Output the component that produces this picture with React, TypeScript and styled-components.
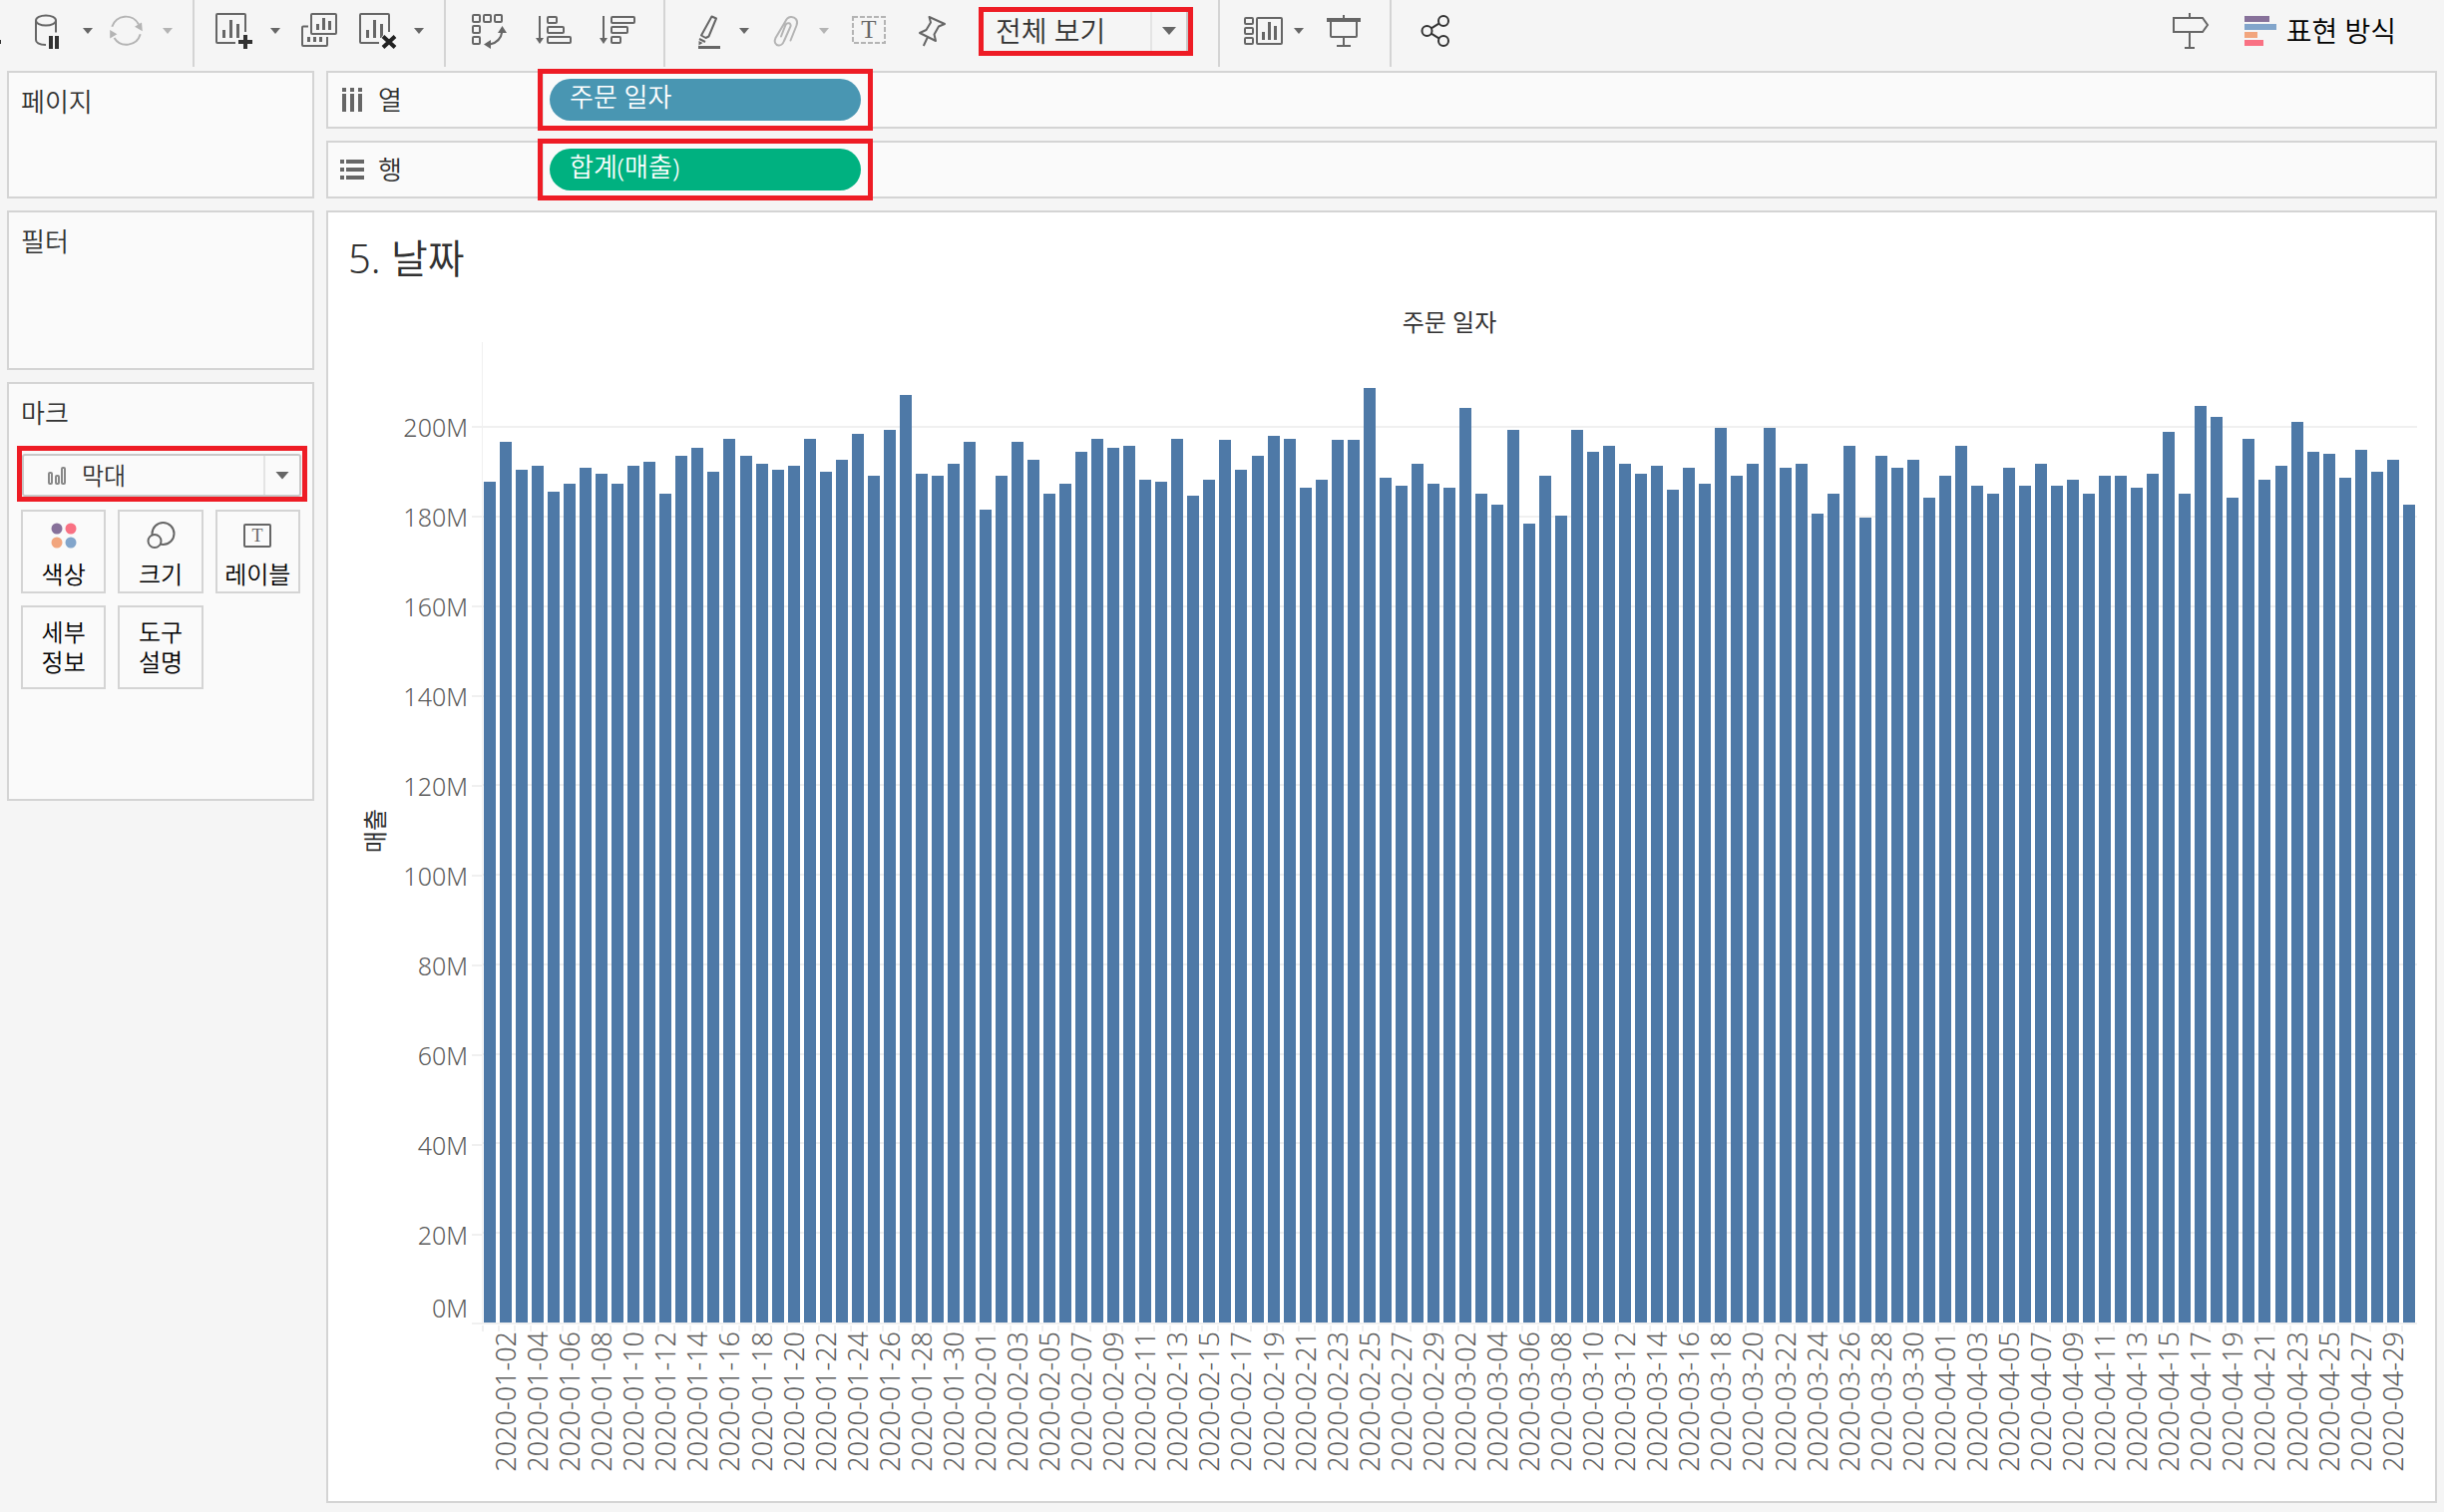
import React from "react";
import styled, { createGlobalStyle, css } from "styled-components";

const color = {
  page: "#f5f5f5",
  panel: "#fafafa",
  line: "#d4d4d4",
  faint: "#f0f0f0",
  icon: "#666666",
  axis: "#5c5c5c",
  dark: "#323232",
  muted: "#b4b4b4",
  bar: "#4e79a7",
  callout: "#ee1c25",
  dimension: "#4996b2",
  measure: "#00b180",
};

const Global = createGlobalStyle`
  * { box-sizing: border-box; }
  body {
    margin: 0;
    background: ${color.page};
    color: ${color.dark};
    font-family: "Noto Sans", "Noto Sans CJK KR", sans-serif;
    font-size: 26px;
    font-weight: 350;
    line-height: 30px;
  }
  button, select { font: inherit; color: inherit; }
  h1, h2 { margin: 0; font-weight: inherit; }
`;

/* ---------- data ---------- */

const sales = [
  187.8, 196.7, 190.4, 191.3, 185.5, 187.3, 190.9, 189.5, 187.3, 191.3,
  192.2, 185.1, 193.5, 195.3, 190.0, 197.5, 193.5, 191.8, 190.4, 191.3,
  197.5, 190.0, 192.7, 198.4, 189.1, 199.3, 207.3, 189.5, 189.1, 191.8,
  196.7, 181.5, 189.1, 196.7, 192.7, 185.1, 187.3, 194.4, 197.5, 195.3,
  195.8, 188.2, 187.8, 197.5, 184.6, 188.2, 197.1, 190.4, 193.5, 198.0,
  197.5, 186.4, 188.2, 197.1, 197.1, 208.7, 188.6, 186.9, 191.8, 187.3,
  186.4, 204.2, 185.1, 182.8, 199.3, 178.4, 189.1, 180.2, 199.3, 194.4,
  195.8, 191.8, 189.5, 191.3, 186.0, 190.9, 187.3, 199.8, 189.1, 191.8,
  199.8, 190.9, 191.8, 180.6, 185.1, 195.8, 179.7, 193.5, 190.9, 192.7,
  184.2, 189.1, 195.8, 186.9, 185.1, 190.9, 186.9, 191.8, 186.9, 188.2,
  185.1, 189.1, 189.1, 186.4, 189.5, 198.9, 185.1, 204.7, 202.4, 184.2,
  197.5, 188.2, 191.3, 201.1, 194.4, 194.0, 188.6, 194.9, 190.0, 192.7,
  182.8,
];

const DAY = 24 * 60 * 60 * 1000;
const days = sales.map((value, i) => ({
  value,
  date: new Date(Date.UTC(2020, 0, 1) + i * DAY).toISOString().slice(0, 10),
}));
const axisMax = 219;
const axisSteps = [200, 180, 160, 140, 120, 100, 80, 60, 40, 20];

/* ---------- toolbar ---------- */

const Page = styled.div`
  display: flex;
  flex-direction: column;
  height: 100vh;
  min-height: 900px;
  overflow: hidden;
`;

const Toolbar = styled.header`
  display: flex;
  height: 67px;
  margin-bottom: 4px;
`;

const Group = styled.div<{ $gap?: number; $start?: number; $end?: number }>`
  display: flex;
  align-items: center;
  height: 62px;
  gap: ${(p) => p.$gap ?? 28}px;
  padding-left: ${(p) => p.$start ?? 0}px;
  padding-right: ${(p) => p.$end ?? 0}px;
`;

const Separator = styled.div`
  width: 2px;
  background: ${color.line};
`;

const RightGroup = styled(Group)`
  margin-left: auto;
`;

const ToolButton = styled.button`
  display: flex;
  align-items: center;
  gap: 10px;
  padding: 0;
  border: 0;
  background: none;
  color: ${color.icon};
  cursor: pointer;
  &:disabled {
    color: ${color.muted};
    cursor: default;
  }
`;

const Split = styled.div<{ $gap?: number }>`
  display: flex;
  align-items: center;
  gap: ${(p) => p.$gap ?? 18}px;
`;

const Caret = styled.span<{ $large?: boolean }>`
  display: block;
  width: ${(p) => (p.$large ? 14 : 10)}px;
  height: ${(p) => (p.$large ? 8 : 6)}px;
  background: currentColor;
  clip-path: polygon(0 0, 100% 0, 50% 100%);
`;

const ShowMeText = styled.span`
  color: #000;
  font-size: 28px;
`;

const Svg = styled.svg`
  display: block;
  overflow: visible;
  fill: none;
  stroke: currentColor;
  stroke-width: 2;
`;

const Solid = styled.g`
  fill: currentColor;
  stroke: none;
`;

function Icon({ w = 36, h = 36, children }: { w?: number; h?: number; children: React.ReactNode }) {
  return (
    <Svg width={w} height={h} viewBox={`0 0 ${w} ${h}`} aria-hidden="true">
      {children}
    </Svg>
  );
}

const ClippedIcon = () => (
  <Icon w={29}>
    <rect x="0" y="27" width="1" height="4" fill={color.dark} stroke="none" />
  </Icon>
);
const DataPauseIcon = () => (
  <Icon>
    <ellipse cx="17" cy="7.5" rx="10" ry="5" />
    <path d="M7 7.5V27c0 3 4 4.8 10 5M27 7.5V19.5" />
    <path d="M20 23h4v13h-4zM26 23h4v13h-4z" fill={color.dark} stroke="none" />
  </Icon>
);
const RefreshIcon = () => (
  <Icon>
    <path d="M3.3 13.7A14.5 14.5 0 0 1 30 11.5M31.7 21.3A14.5 14.5 0 0 1 5.5 25" />
    <Solid>
      <path d="M26 13.8l7-4.3.8 8.7zM1.2 17v8.4l7.2-4.2z" />
    </Solid>
  </Icon>
);
const SheetFrame = () => (
  <>
    <path d="M19 30H1a1 1 0 0 1-1-1V2a1 1 0 0 1 1-1h27a1 1 0 0 1 1 1v17" />
    <Solid>
      <path d="M6 17h3v8H6zM13 7h3v18h-3zM20 11h3v14h-3z" />
    </Solid>
  </>
);
const NewSheetIcon = () => (
  <Icon>
    <SheetFrame />
    <path d="M22 29h14M29 22v14" stroke={color.dark} strokeWidth="4" />
  </Icon>
);
const DuplicateIcon = () => (
  <Icon>
    <rect x="9" y="1" width="25" height="20" rx="1" />
    <path d="M6 13.5H1a1 1 0 0 0-1 1V32a1 1 0 0 0 1 1h23a1 1 0 0 0 1-1v-8" />
    <Solid>
      <path d="M14 11h3v6h-3zM20 5h3v12h-3zM26 8h3v9h-3zM5 24h3v5H5zM11 24h3v5h-3zM17 24h3v5h-3z" />
    </Solid>
  </Icon>
);
const ClearSheetIcon = () => (
  <Icon>
    <SheetFrame />
    <circle cx="29" cy="29" r="9" fill={color.page} stroke="none" />
    <path d="M23 23.5l12 11M35 23.5l-12 11" stroke="#222" strokeWidth="4" />
  </Icon>
);
const SwapIcon = () => (
  <Icon>
    <rect x="1" y="2" width="7" height="7" rx="1" />
    <rect x="12" y="2" width="7" height="7" rx="1" />
    <rect x="23" y="2" width="7" height="7" rx="1" />
    <rect x="1" y="13" width="7" height="7" rx="1" />
    <rect x="1" y="24" width="7" height="7" rx="1" />
    <path d="M30.500 18c-1 7-5 12-12.500 13.500" />
    <Solid>
      <path d="M30.500 13l4.500 7h-9zM12 31.500l7-4.500v9z" />
    </Solid>
  </Icon>
);
const SortIcon = ({ widths }: { widths: number[] }) => (
  <Icon>
    <path d="M4 3v23" />
    <Solid>
      <path d="M0 25h8l-4 6z" />
    </Solid>
    {widths.map((w, i) => (
      <rect key={i} x="12" y={4 + i * 10} width={w} height="6" rx="1" />
    ))}
  </Icon>
);
const HighlightIcon = () => (
  <Icon>
    <path d="M26.500 3.500l4.500 2-7.500 18-3 1.500-4.500-2.500z" strokeLinejoin="round" />
    <path d="M14 26l6 3" />
    <Solid>
      <path d="M13.500 28l4 2-4 2.500zM13 33h22v3H13z" />
    </Solid>
  </Icon>
);
const ClipIcon = () => (
  <Icon>
    <path
      d="M25.500 27.500l6-15c2-5-1.500-9-6-8.500-3 .5-4.500 2.500-5.500 5L10.500 25c-2 4 0 7 3 7.500 3 .3 4.500-2 5.500-4.500l6.500-14.500c1-3.500-3.500-4.500-5-1.500L16 23.500"
      strokeLinecap="round"
    />
  </Icon>
);
const TextGlyph = styled.text`
  font-family: "Liberation Serif", serif;
  font-weight: 400;
  text-anchor: middle;
  fill: ${color.icon};
  stroke: none;
`;
const TextBoxIcon = () => (
  <Icon>
    <rect x="2" y="4" width="32" height="26" stroke={color.muted} strokeDasharray="5 2" />
    <TextGlyph x="18" y="25" fontSize="25">T</TextGlyph>
  </Icon>
);
const PinIcon = () => (
  <Icon>
    <path
      d="M14.500 4L30 11l-6 2.500-4.500 8L21 28 5 20l6.500-3 4.500-7.500zM13 24l-4.200 9"
      strokeLinejoin="round"
    />
  </Icon>
);
const DashboardIcon = () => (
  <Icon w={40}>
    <rect x="1" y="5" width="8" height="6" rx="1" />
    <rect x="1" y="15" width="8" height="6" rx="1" />
    <rect x="1" y="25" width="8" height="6" rx="1" />
    <rect x="13" y="5" width="25" height="26" rx="1" />
    <Solid>
      <path d="M18 19h3v8h-3zM24 9h3v18h-3zM30 13h3v14h-3z" />
    </Solid>
  </Icon>
);
const PresentIcon = () => (
  <Icon>
    <path d="M18 2v4M5 8v15a1 1 0 0 0 1 1h24a1 1 0 0 0 1-1V8M18 24v9M11 33h14" />
    <path d="M1 7h34" strokeWidth="4" />
  </Icon>
);
const ShareIcon = () => (
  <Icon>
    <g stroke={color.dark}>
      <circle cx="9.500" cy="18" r="5" />
      <circle cx="26" cy="8" r="5" />
      <circle cx="26" cy="28" r="5" />
      <path d="M13.800 15.300l8-5M13.800 20.700l8 5" />
    </g>
  </Icon>
);
const GuideIcon = () => (
  <Icon>
    <path d="M17 0v5M1 5h29l5 7-5 7H1zM17 19v16M12 35h10" />
  </Icon>
);
const ShowMeIcon = () => (
  <Icon w={32} h={30}>
    <g stroke="none">
      <rect width="25" height="6" fill="#87719a" />
      <rect y="8" width="32" height="6" fill="#82a5cb" />
      <rect y="16" width="13" height="6" fill="#f2a57d" />
      <rect y="24" width="19" height="6" fill="#f97183" />
    </g>
  </Icon>
);

/* ---------- drop-downs ---------- */

const calloutBorder = css`
  border: 5px solid ${color.callout};
`;

const Dropdown = styled.div<{ $framed?: boolean }>`
  display: grid;
  align-items: stretch;
  ${(p) =>
    p.$framed &&
    css`
      border: 2px solid #c8c8c8;
      border-radius: 3px;
    `}
  & > * { grid-area: 1 / 1; }
`;

const Select = styled.select<{ $inset: number }>`
  width: 100%;
  padding: 0 40px 0 ${(p) => p.$inset}px;
  border: 0;
  appearance: none;
  background: none;
  cursor: pointer;
`;

const DropdownArrow = styled.span<{ $edge?: boolean }>`
  display: flex;
  align-items: center;
  justify-content: center;
  justify-self: end;
  width: ${(p) => (p.$edge ? 38 : 36)}px;
  border-left: 2px solid #e4e4e4;
  border-right: ${(p) => (p.$edge ? "2px solid #c8c8c8" : "0")};
  color: ${color.icon};
  pointer-events: none;
`;

const ToolbarCallout = styled.div`
  ${calloutBorder}
  display: grid;
  width: 215px;
  height: 49px;
  font-size: 28px;
`;

const MarkCallout = styled.div`
  ${calloutBorder}
  display: grid;
  height: 56px;
  margin-top: 18px;
  padding: 3px 1px 0 0;
  font-size: 24px;
`;

const MarkTypeIcon = styled.span`
  align-self: center;
  margin-left: 24px;
  color: #888;
  pointer-events: none;
`;

/* ---------- side panels ---------- */

const Workspace = styled.div`
  display: flex;
  flex: 1;
  gap: 12px;
  min-height: 0;
  padding: 0 7px 9px;
`;

const Sidebar = styled.aside`
  display: flex;
  flex-direction: column;
  gap: 12px;
  flex: 0 0 308px;
`;

const Card = styled.section<{ $minHeight: number }>`
  min-height: ${(p) => p.$minHeight}px;
  padding: 14px 5px 14px 8px;
  border: 2px solid ${color.line};
  background: ${color.panel};
`;

const CardTitle = styled.h2`
  padding-left: 4px;
  font-size: 26px;
`;

const MarkGrid = styled.div`
  display: grid;
  grid-template-columns: repeat(3, 1fr);
  gap: 12px;
  margin: 8px 7px 0 4px;
`;

const MarkButton = styled.button<{ $icon?: boolean }>`
  display: flex;
  flex-direction: column;
  align-items: center;
  justify-content: center;
  gap: 10px;
  height: 84px;
  padding: ${(p) => (p.$icon ? "8px 0 0" : "0")};
  border: 2px solid ${color.line};
  background: ${color.panel};
  color: #000;
  font-size: 24px;
  line-height: 30px;
  white-space: pre-line;
  cursor: pointer;
  svg { color: ${color.icon}; }
`;

/* ---------- shelves ---------- */

const Main = styled.main`
  display: flex;
  flex-direction: column;
  flex: 1;
  gap: 12px;
  min-width: 0;
`;

const Shelf = styled.section`
  display: flex;
  height: 58px;
  flex: none;
  border: 2px solid ${color.line};
  background: ${color.panel};
`;

const ShelfName = styled.h2`
  display: flex;
  align-items: center;
  gap: 14px;
  width: 216px;
  padding-left: 12px;
  border-right: 2px solid #e4e4e4;
  font-size: 26px;
  svg { color: ${color.icon}; }
`;

const ShelfFields = styled.div`
  display: flex;
  align-items: center;
  padding-left: 6px;
`;

const Pill = styled.button<{ $fill: string }>`
  position: relative;
  width: 312px;
  height: 42px;
  padding: 0 20px 6px;
  border: 0;
  border-radius: 21px;
  background: ${(p) => p.$fill};
  color: #fff;
  font-size: 26px;
  text-align: left;
  &::after {
    content: "";
    position: absolute;
    inset: -10px -12px;
    ${calloutBorder}
  }
`;

/* ---------- view ---------- */

const View = styled.section`
  display: flex;
  flex-direction: column;
  flex: 1;
  min-height: 0;
  padding: 22px 18px 0 20px;
  border: 2px solid ${color.line};
  background: #fff;
`;

const ViewTitle = styled.h1`
  font-size: 40px;
  line-height: 48px;
`;

const Chart = styled.div`
  display: grid;
  flex: 1;
  grid-template-columns: 54px 80px minmax(0, 1fr);
  grid-template-rows: 30px minmax(0, 1fr) 177px;
  min-height: 0;
  margin-top: 25px;
`;

const ChartHeader = styled.div`
  grid-area: 1 / 3;
  text-align: center;
  font-size: 24px;
  font-weight: 400;
`;

const sideways = css`
  writing-mode: vertical-rl;
  text-orientation: sideways;
  transform: rotate(180deg);
`;

const YTitle = styled.div`
  ${sideways}
  grid-area: 2 / 1;
  place-self: center;
  font-size: 24px;
  font-weight: 400;
`;

const YAxis = styled.div`
  display: flex;
  flex-direction: column;
  grid-area: 2 / 2;
  margin-top: 5px;
  color: ${color.axis};
  font-size: 25px;
  font-weight: 300;
`;

const Headroom = styled.div`
  flex: ${axisMax - 210} 0 0;
`;

const YBand = styled.div<{ $grow: number; $baseline?: boolean }>`
  display: flex;
  flex: ${(p) => p.$grow} 0 0;
  align-items: ${(p) => (p.$baseline ? "flex-end" : "center")};
  justify-content: flex-end;
  gap: 4px;
  min-height: 0;
  &::after {
    content: "";
    width: 10px;
    height: 2px;
    background: ${color.faint};
  }
`;

const Plot = styled.div`
  display: grid;
  grid-area: 2 / 3;
  grid-template-rows: minmax(0, 1fr);
  grid-template-columns: minmax(0, 1fr);
  margin-top: 5px;
  border-bottom: 2px solid ${color.faint};
  & > * { grid-area: 1 / 1; }
`;

const GridLines = styled.div`
  display: flex;
  flex-direction: column;
  border-left: 1px solid ${color.faint};
`;

const GridBand = styled.div<{ $grow: number }>`
  display: flex;
  flex: ${(p) => p.$grow} 0 0;
  align-items: center;
  &::after {
    content: "";
    flex: 1;
    height: 2px;
    background: ${color.faint};
  }
`;

const Floor = styled.div`
  flex: 10 0 0;
`;

const Bars = styled.div`
  display: flex;
  align-items: flex-end;
`;

const BarCell = styled.div`
  display: flex;
  flex: 1 1 0;
  align-items: flex-end;
  justify-content: center;
  height: 100%;
`;

const Bar = styled.div`
  width: 75%;
  max-width: 12px;
  background: ${color.bar};
`;

const XAxis = styled.div`
  display: flex;
  grid-area: 3 / 3;
  color: ${color.axis};
  font-size: 27px;
  font-weight: 300;
`;

const XCell = styled.div`
  display: flex;
  flex: 1 1 0;
  flex-direction: column;
  align-items: center;
  min-width: 0;
  &::before {
    content: "";
    align-self: flex-start;
    width: 2px;
    height: 6px;
    margin-top: 1px;
    background: ${color.faint};
  }
`;

const XLabel = styled.span`
  ${sideways}
  line-height: 26px;
  white-space: nowrap;
`;

const YLabel = styled.span<{ $baseline?: boolean }>`
  padding-bottom: ${(p) => (p.$baseline ? 2 : 0)}px;
`;

export default function App() {
  return (
    <>
      <Global />
      <Page>
        <Toolbar>
          <Group $gap={16} $end={20}>
            <Split $gap={0}>
              <ClippedIcon />
              <Split>
                <ToolButton aria-label="자동 업데이트 일시 중지"><DataPauseIcon /></ToolButton>
                <ToolButton aria-label="업데이트 옵션"><Caret /></ToolButton>
              </Split>
            </Split>
            <Split>
              <ToolButton disabled aria-label="새로 고침"><RefreshIcon /></ToolButton>
              <ToolButton disabled aria-label="새로 고침 옵션"><Caret /></ToolButton>
            </Split>
          </Group>
          <Separator />
          <Group $gap={22} $start={22} $end={20}>
            <Split>
              <ToolButton aria-label="새 워크시트"><NewSheetIcon /></ToolButton>
              <ToolButton aria-label="새 워크시트 옵션"><Caret /></ToolButton>
            </Split>
            <ToolButton aria-label="복제"><DuplicateIcon /></ToolButton>
            <Split>
              <ToolButton aria-label="시트 지우기"><ClearSheetIcon /></ToolButton>
              <ToolButton aria-label="시트 지우기 옵션"><Caret /></ToolButton>
            </Split>
          </Group>
          <Separator />
          <Group $start={26} $end={28}>
            <ToolButton aria-label="행과 열 바꾸기"><SwapIcon /></ToolButton>
            <ToolButton aria-label="오름차순 정렬"><SortIcon widths={[9, 16, 23]} /></ToolButton>
            <ToolButton aria-label="내림차순 정렬"><SortIcon widths={[23, 16, 9]} /></ToolButton>
          </Group>
          <Separator />
          <Group $gap={22} $start={20} $end={25}>
            <Group $gap={16}>
              <Split>
                <ToolButton aria-label="하이라이트"><HighlightIcon /></ToolButton>
                <ToolButton aria-label="하이라이트 옵션"><Caret /></ToolButton>
              </Split>
              <Split>
                <ToolButton disabled aria-label="멤버 그룹화"><ClipIcon /></ToolButton>
                <ToolButton disabled aria-label="그룹화 옵션"><Caret /></ToolButton>
              </Split>
            </Group>
            <Group>
              <ToolButton aria-label="마크 레이블 표시"><TextBoxIcon /></ToolButton>
              <ToolButton aria-label="축 고정"><PinIcon /></ToolButton>
              <ToolbarCallout>
                <Dropdown>
                  <Select $inset={12} aria-label="맞춤" defaultValue="all">
                    <option value="all">전체 보기</option>
                  </Select>
                  <DropdownArrow $edge><Caret $large /></DropdownArrow>
                </Dropdown>
              </ToolbarCallout>
            </Group>
          </Group>
          <Separator />
          <Group $gap={22} $start={24} $end={28}>
            <Split $gap={10}>
              <ToolButton aria-label="카드 표시"><DashboardIcon /></ToolButton>
              <ToolButton aria-label="카드 옵션"><Caret /></ToolButton>
            </Split>
            <ToolButton aria-label="프레젠테이션 모드"><PresentIcon /></ToolButton>
          </Group>
          <Separator />
          <Group $start={26}>
            <ToolButton aria-label="공유"><ShareIcon /></ToolButton>
          </Group>
          <RightGroup $gap={36} $end={48}>
            <ToolButton aria-label="데이터 가이드"><GuideIcon /></ToolButton>
            <ToolButton>
              <ShowMeIcon />
              <ShowMeText>표현 방식</ShowMeText>
            </ToolButton>
          </RightGroup>
        </Toolbar>

        <Workspace>
          <Sidebar>
            <Card $minHeight={128}><CardTitle>페이지</CardTitle></Card>
            <Card $minHeight={160}><CardTitle>필터</CardTitle></Card>
            <Card $minHeight={420}>
              <CardTitle>마크</CardTitle>
              <MarkCallout>
                <Dropdown $framed>
                  <Select $inset={58} aria-label="마크 유형" defaultValue="bar">
                    <option value="bar">막대</option>
                  </Select>
                  <MarkTypeIcon>
                    <Icon w={18} h={18}>
                      <rect x="1" y="6" width="3" height="11" rx="1" />
                      <rect x="8" y="9" width="3" height="8" rx="1" />
                      <rect x="14" y="1" width="3" height="16" rx="1" />
                    </Icon>
                  </MarkTypeIcon>
                  <DropdownArrow><Caret $large /></DropdownArrow>
                </Dropdown>
              </MarkCallout>
              <MarkGrid>
                <MarkButton $icon>
                  <Icon w={28} h={28}>
                    <g stroke="none">
                      <circle cx="7" cy="7" r="5.500" fill="#87719a" />
                      <circle cx="21" cy="7" r="5.500" fill="#f97183" />
                      <circle cx="7" cy="21" r="5.500" fill="#f2a57d" />
                      <circle cx="21" cy="21" r="5.500" fill="#82a5cb" />
                    </g>
                  </Icon>
                  색상
                </MarkButton>
                <MarkButton $icon>
                  <Icon w={28} h={28}>
                    <circle cx="16.500" cy="12" r="11" />
                    <circle cx="8" cy="19.500" r="6.500" fill={color.panel} />
                  </Icon>
                  크기
                </MarkButton>
                <MarkButton $icon>
                  <Icon w={28} h={28}>
                    <rect x="1" y="3" width="26" height="22" rx="1" />
                    <TextGlyph x="14" y="20" fontSize="18">T</TextGlyph>
                  </Icon>
                  레이블
                </MarkButton>
                <MarkButton>{"세부\n정보"}</MarkButton>
                <MarkButton>{"도구\n설명"}</MarkButton>
              </MarkGrid>
            </Card>
          </Sidebar>

          <Main>
            <Shelf>
              <ShelfName>
                <Icon w={24} h={24}>
                  <Solid>
                    <path d="M2 0h4v4H2zM10 0h4v4h-4zM18 0h4v4h-4zM2 6h4v18H2zM10 6h4v18h-4zM18 6h4v18h-4z" />
                  </Solid>
                </Icon>
                열
              </ShelfName>
              <ShelfFields><Pill $fill={color.dimension}>주문 일자</Pill></ShelfFields>
            </Shelf>
            <Shelf>
              <ShelfName>
                <Icon w={24} h={24}>
                  <Solid>
                    <path d="M0 2h4v4H0zM0 10h4v4H0zM0 18h4v4H0zM6 2h18v4H6zM6 10h18v4H6zM6 18h18v4H6z" />
                  </Solid>
                </Icon>
                행
              </ShelfName>
              <ShelfFields><Pill $fill={color.measure}>합계(매출)</Pill></ShelfFields>
            </Shelf>

            <View>
              <ViewTitle>5. 날짜</ViewTitle>
              <Chart>
                <ChartHeader>주문 일자</ChartHeader>
                <YTitle>매출</YTitle>
                <YAxis>
                  <Headroom />
                  {axisSteps.map((n) => (
                    <YBand key={n} $grow={20}><YLabel>{n}M</YLabel></YBand>
                  ))}
                  <YBand $grow={10} $baseline><YLabel $baseline>0M</YLabel></YBand>
                </YAxis>
                <Plot>
                  <GridLines>
                    <Headroom />
                    {axisSteps.map((n) => <GridBand key={n} $grow={20} />)}
                    <Floor />
                  </GridLines>
                  <Bars>
                    {days.map((d) => (
                      <BarCell key={d.date}>
                        <Bar style={{ height: `${(d.value / axisMax) * 100}%` }} />
                      </BarCell>
                    ))}
                  </Bars>
                </Plot>
                <XAxis>
                  {days.map((d, i) => (
                    <XCell key={d.date}>{i % 2 === 1 && <XLabel>{d.date}</XLabel>}</XCell>
                  ))}
                </XAxis>
              </Chart>
            </View>
          </Main>
        </Workspace>
      </Page>
    </>
  );
}
